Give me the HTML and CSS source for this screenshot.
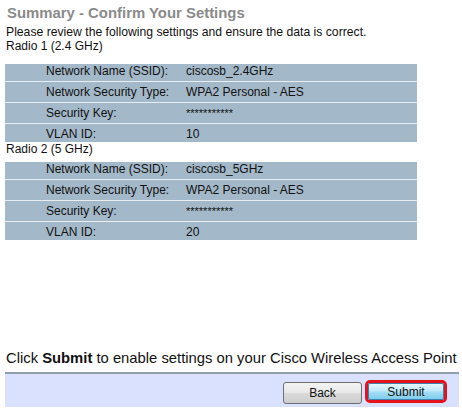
FILE: index.html
```html
<!DOCTYPE html>
<html>
<head>
<meta charset="utf-8">
<link rel="stylesheet" href="styles.css">
</head>
<body>
<div class="page">
  <main class="content">
    <h1 class="title">Summary - Confirm Your Settings</h1>
    <p class="intro">Please review the following settings and ensure the data is correct.</p>
    <p class="radio radio-first">Radio 1 (2.4 GHz)</p>
    <div class="kv kv-first">
      <div class="row"><span class="label">Network Name (SSID):</span><span class="value">ciscosb_2.4GHz</span></div>
      <div class="row"><span class="label">Network Security Type:</span><span class="value">WPA2 Personal - AES</span></div>
      <div class="row"><span class="label">Security Key:</span><span class="value stars">***********</span></div>
      <div class="row"><span class="label">VLAN ID:</span><span class="value">10</span></div>
    </div>
    <p class="radio">Radio 2 (5 GHz)</p>
    <div class="kv kv-second">
      <div class="row"><span class="label">Network Name (SSID):</span><span class="value">ciscosb_5GHz</span></div>
      <div class="row"><span class="label">Network Security Type:</span><span class="value">WPA2 Personal - AES</span></div>
      <div class="row"><span class="label">Security Key:</span><span class="value stars">***********</span></div>
      <div class="row"><span class="label">VLAN ID:</span><span class="value">20</span></div>
    </div>
  </main>
  <footer class="footer">
    <p class="hint">Click <b>Submit</b> to enable settings on your Cisco Wireless Access Point</p>
    <div class="bar">
      <button class="btn btn-back" type="button">Back</button>
      <span class="highlight"><button class="btn btn-submit" type="button">Submit</button></span>
    </div>
  </footer>
</div>
</body>
</html>
```

FILE: styles.css
```css
html, body {
  margin: 0;
  padding: 0;
  background: #ffffff;
}
body {
  font-family: "Liberation Sans", Arial, sans-serif;
  font-size: 12px;
  color: #111111;
}
.page {
  display: flex;
  flex-direction: column;
  min-height: 409px;
  box-sizing: border-box;
}
.content {
  flex: 1;
}
.title {
  margin: 0;
  padding: 4px 0 0 7px;
  font-size: 14.9px;
  line-height: 18px;
  font-weight: bold;
  color: #8a8a8a;
}
.intro {
  margin: 3px 0 0 0;
  padding-left: 6px;
  font-size: 12.2px;
  line-height: 14px;
  white-space: nowrap;
}
.radio {
  margin: 0;
  padding-left: 6px;
  line-height: 14px;
}
.kv {
  display: flex;
  flex-direction: column;
  gap: 1px;
  margin-left: 5px;
  width: 412px;
  background: #e9eef2;
}
.kv-first {
  margin-top: 11px;
}
.kv-second {
  margin-top: 6px;
}
.row {
  display: grid;
  grid-template-columns: 181px 1fr;
  height: 20px;
  line-height: 20px;
  background: #a3b8c8;
  overflow: hidden;
}
.row:first-child {
  height: 17px;
  line-height: 15px;
}
.row:last-child {
  height: 18px;
}
.label {
  padding-left: 41px;
}
.stars {
  font-size: 11px;
}
.footer {
  display: flex;
  flex-direction: column;
  padding-bottom: 2px;
}
.hint {
  margin: 0 0 5px 0;
  padding-left: 6px;
  font-size: 14.8px;
  line-height: 17px;
  white-space: nowrap;
}
.bar {
  margin-left: 5px;
  width: 454px;
  height: 33px;
  box-sizing: content-box;
  border-top: 2px solid #8f9fac;
  background: #d9e1fe;
  display: flex;
  justify-content: flex-end;
  align-items: flex-start;
}
.btn {
  font-family: "Liberation Sans", Arial, sans-serif;
  font-size: 12px;
  color: #111111;
  height: 22px;
  padding: 0;
  border-radius: 3px;
  cursor: pointer;
}
.btn-back {
  width: 79px;
  margin-top: 8px;
  border: 1px solid #707070;
  background: linear-gradient(#f4f4f4 0%, #e8e8e8 48%, #d9d9d9 52%, #cdcdcd 100%);
}
.highlight {
  display: flex;
  margin: 6px 12px 0 3px;
  border: 3px solid #e3121c;
  border-radius: 5px;
}
.btn-submit {
  width: 76px;
  height: 17px;
  border: 1px solid #3c7fb1;
  border-radius: 2px;
  background: linear-gradient(#e6f7fe 0%, #bfe8f9 48%, #a4def5 52%, #7fcdea 100%);
}
```
